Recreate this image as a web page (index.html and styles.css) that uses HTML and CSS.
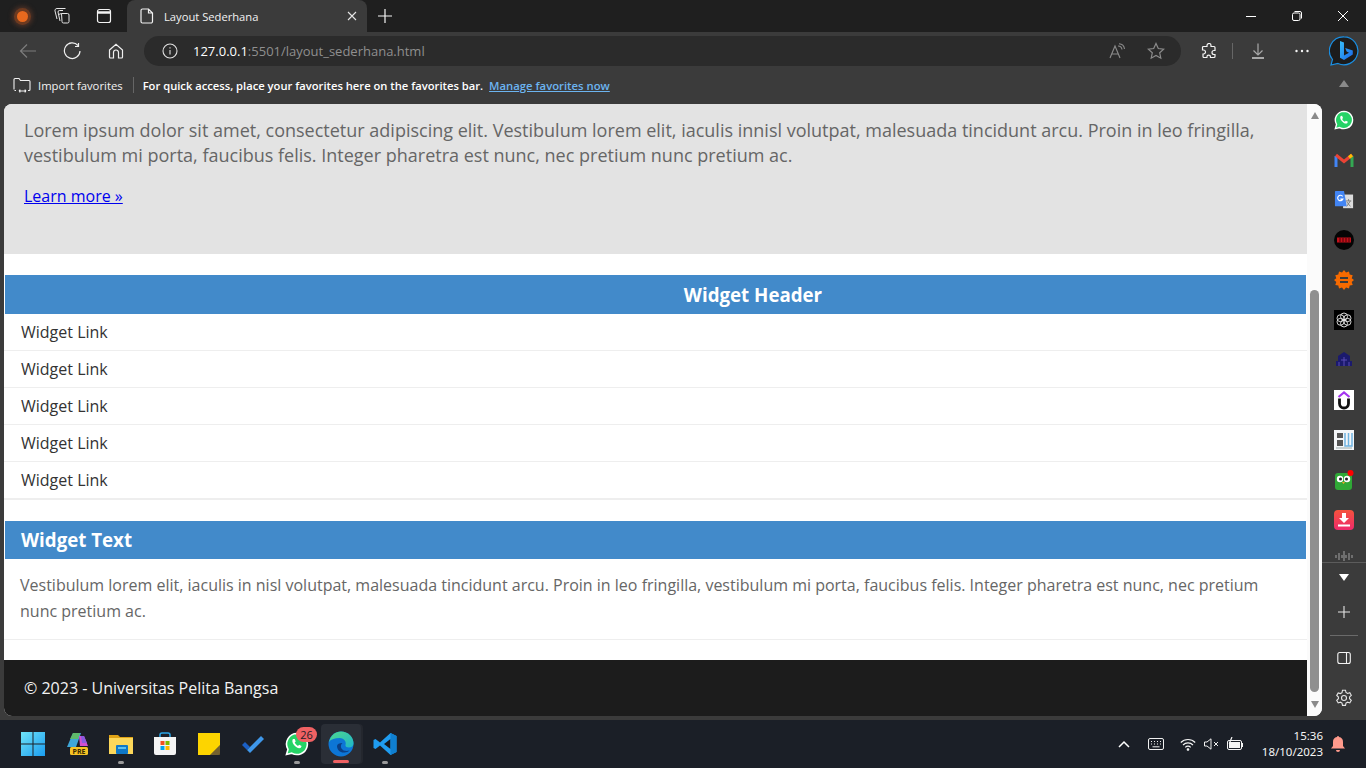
FILE: index.html
```html
<!DOCTYPE html>
<html lang="en">
<head>
  <meta charset="UTF-8" />
  <title>Layout Sederhana</title>
  <link rel="stylesheet" href="styles.css">
</head>
<body>
  <div class="desktop">
    <!-- tab strip -->
    <div class="tabstrip">
      <div class="strip-btn profile"><span class="profile-dot"></span></div>
      <div class="strip-btn">
        <svg width="18" height="18" viewBox="0 0 18 18" fill="none" stroke="#e6e6e6" stroke-width="1"><path d="M8.500 6.500h6a1.500 1.500 0 0 1 1.500 1.500v6.500a1.500 1.500 0 0 1-1.500 1.500h-4a1.500 1.500 0 0 1-1.500-1.500z"/><path d="M10 3.500H6.500A1.500 1.500 0 0 0 5 5l2 9"/><path d="M12.500 1.500H4a2 2 0 0 0-2 2.500l2 8"/><path d="M5.500 7.500l3-1"/></svg>
      </div>
      <div class="strip-btn">
        <svg width="16" height="16" viewBox="0 0 16 16" fill="none" stroke="#f2f2f2" stroke-width="1.200"><rect x="1.500" y="1.500" width="13" height="13" rx="2"/><path d="M1.500 4.500h13" stroke-width="2.500"/></svg>
      </div>
      <div class="tab">
        <svg width="14" height="16" viewBox="0 0 14 16" fill="none" stroke="#f2f2f2" stroke-width="1.200"><path d="M2.500 1h6l4 4v8.500a1.500 1.500 0 0 1-1.500 1.500H2.500A1.500 1.500 0 0 1 1 13.500v-11A1.500 1.500 0 0 1 2.500 1zM8.500 1v4h4"/></svg>
        <span class="tab-title">Layout Sederhana</span>
        <svg class="tab-close" width="10" height="10" viewBox="0 0 10 10" stroke="#e6e6e6" stroke-width="1.100"><path d="M1 1l8 8M9 1l-8 8"/></svg>
      </div>
      <div class="new-tab">
        <svg width="16" height="16" viewBox="0 0 16 16" stroke="#f5f5f5" stroke-width="1.200"><path d="M8 1v14M1 8h14"/></svg>
      </div>
      <div class="window-btns">
        <div class="win-btn"><svg width="12" height="12" viewBox="0 0 12 12" stroke="#fff"><path d="M1 6.500h10"/></svg></div>
        <div class="win-btn"><svg width="12" height="12" viewBox="0 0 12 12" fill="none" stroke="#fff"><rect x="1.500" y="3" width="7.500" height="7.500" rx="1.500"/><path d="M3.500 1.500h5.500a1.500 1.500 0 0 1 1.500 1.500v5.500"/></svg></div>
        <div class="win-btn"><svg width="12" height="12" viewBox="0 0 12 12" stroke="#fff"><path d="M1 1l10 10M11 1L1 11"/></svg></div>
      </div>
    </div>

    <!-- address bar row -->
    <div class="toolbar">
      <div class="tool-btn">
        <svg width="18" height="18" viewBox="0 0 18 18" fill="none" stroke="#7d7d7d" stroke-width="1.200"><path d="M17 9H1.500M8 2.500 1.500 9 8 15.500"/></svg>
      </div>
      <div class="tool-btn">
        <svg width="18" height="18" viewBox="0 0 18 18" fill="none" stroke="#f0f0f0" stroke-width="1.200"><path d="M15 3.500a7.800 7.800 0 1 0 2 5.500"/><path d="M15.500 1v3.500H12"/></svg>
      </div>
      <div class="tool-btn">
        <svg width="16" height="16" viewBox="0 0 16 16" fill="none" stroke="#f0f0f0" stroke-width="1.200"><path d="M1.500 7 8 1.200 14.500 7v7a1 1 0 0 1-1 1h-3V9.500a2.500 2.500 0 0 0-5 0V15h-3a1 1 0 0 1-1-1z"/></svg>
      </div>
      <div class="address">
        <svg class="info-icon" width="16" height="16" viewBox="0 0 16 16" fill="none" stroke="#e0e0e0" stroke-width="1.100"><circle cx="8" cy="8" r="7"/><path d="M8 7v4.500M8 4.200v1.300"/></svg>
        <span class="url"><span class="url-host">127.0.0.1</span>:5501/layout_sederhana.html</span>
        <svg class="addr-icon" width="18" height="16" viewBox="0 0 18 16" fill="none" stroke="#8c8c8c" stroke-width="1.100"><path d="M1 15 6 3l5 12M2.800 11h6.400"/><path d="M9 3a4 4 0 0 1 4 3.500M10 .8a6 6 0 0 1 5.500 5.200"/></svg>
        <svg class="addr-icon star" width="18" height="18" viewBox="0 0 18 18" fill="none" stroke="#8c8c8c" stroke-width="1.200"><path d="M9 1.500l2.300 5 5.400.6-4 3.700 1.100 5.400L9 13.500l-4.800 2.700 1.100-5.400-4-3.700 5.400-.6z"/></svg>
      </div>
      <div class="tool-btn ext-btn">
        <svg width="16" height="16" viewBox="0 0 16 16" fill="none" stroke="#f5f5f5" stroke-width="1.200"><path d="M6 2.500a2 2 0 0 1 4 0V3.500h3a1 1 0 0 1 1 1v3h-1a2 2 0 0 0 0 4h1v2a1 1 0 0 1-1 1H9.500v-.5a1.800 1.800 0 0 0-3.600 0v.5H3a1 1 0 0 1-1-1V11h.5a2 2 0 0 0 0-4H1.500V4.500a1 1 0 0 1 1-1H6z"/></svg>
      </div>
      <span class="tool-sep"></span>
      <div class="tool-btn dl-btn">
        <svg width="14" height="16" viewBox="0 0 14 16" fill="none" stroke-width="1.200"><path d="M7 .5v11M2.500 7.500 7 12l4.500-4.500" stroke="#a8a8a8"/><path d="M1 15h12" stroke="#f5f5f5"/></svg>
      </div>
      <div class="tool-btn dots-btn">
        <svg width="16" height="4" viewBox="0 0 16 4" fill="#f5f5f5"><circle cx="2.500" cy="2" r="1.200"/><circle cx="8" cy="2" r="1.200"/><circle cx="13.500" cy="2" r="1.200"/></svg>
      </div>
      <div class="bing-btn">
        <svg width="30" height="30" viewBox="0 0 30 30">
          <defs>
            <linearGradient id="bingB" x1="0" y1="0" x2="1" y2="1"><stop offset="0" stop-color="#37bdf8"/><stop offset="1" stop-color="#1b66e8"/></linearGradient>
          </defs>
          <path d="M15 .8a14 14 0 1 1-6 26.700L2 29l1.500-5.500A14 14 0 0 1 15 .8z" fill="#1c1c1c" stroke="#1a8fe3" stroke-width="1.200"/>
          <path d="M11 5l4 1.500v13l5-2.800-2.400-1.200-1.400-3.600 7.600 2.700v4L15 24l-4-2.200z" fill="url(#bingB)"/>
        </svg>
      </div>
    </div>

    <div class="browser-main">
      <div class="browser-left">
        <!-- favorites bar -->
        <div class="favbar">
          <svg width="18" height="16" viewBox="0 0 18 16" fill="none" stroke="#f0f0f0" stroke-width="1.100"><path d="M1 12.500V2.500a1 1 0 0 1 1-1h4l1.500 2H16a1 1 0 0 1 1 1v8a1 1 0 0 1-1 1h-1M3 13.500H1.500M6 14h7M6 14l1.300-1.300M6 14l1.300 1.300M13 14l-1.300-1.300M13 14l-1.300 1.300"/></svg>
          <span class="fav-import">Import favorites</span>
          <span class="fav-sep"></span>
          <b class="fav-hint">For quick access, place your favorites here on the favorites bar.</b>
          <a class="fav-link" href="#">Manage favorites now</a>
        </div>

        <!-- the page inside the browser -->
        <div class="viewport">
          <div class="page">
            <section class="hero">
              <p>Lorem ipsum dolor sit amet, consectetur adipiscing elit. Vestibulum lorem elit, iaculis innisl volutpat, malesuada tincidunt arcu. Proin in leo fringilla, vestibulum mi porta, faucibus felis. Integer pharetra est nunc, nec pretium nunc pretium ac.</p>
              <a class="learn" href="#">Learn more »</a>
            </section>

            <section class="widget widget-links">
              <h3 class="widget-head">Widget Header</h3>
              <ul class="link-list">
                <li>Widget Link</li>
                <li>Widget Link</li>
                <li>Widget Link</li>
                <li>Widget Link</li>
                <li>Widget Link</li>
              </ul>
            </section>

            <section class="widget widget-text">
              <h3 class="widget-head">Widget Text</h3>
              <p>Vestibulum lorem elit, iaculis in nisl volutpat, malesuada tincidunt arcu. Proin in leo fringilla, vestibulum mi porta, faucibus felis. Integer pharetra est nunc, nec pretium nunc pretium ac.</p>
            </section>

            <footer class="page-footer">© 2023 - Universitas Pelita Bangsa</footer>
          </div>
          <div class="scrollbar">
            <span class="arrow-up"></span>
            <span class="thumb"></span>
            <span class="arrow-down"></span>
          </div>
        </div>
      </div>

      <!-- edge sidebar -->
      <aside class="sidebar">
        <span class="side-caret-up"></span>
        <div class="side-apps">
          <svg viewBox="0 0 22 22"><path d="M11 1.500a9.500 9.500 0 0 0-8.200 14.300L1.500 20.500l4.800-1.200A9.500 9.500 0 1 0 11 1.500z" fill="#25d366" stroke="#fff" stroke-width="1.500"/><path d="M7.500 6.500c-1 1-1 3 1 5.500s4.500 3.500 6 2.500l.8-1.500-2.300-1.200-1 1c-1.200-.3-2.500-1.700-3-3l.9-1-1-2.400z" fill="#fff"/></svg>
          <svg viewBox="0 0 20 20" fill="none" stroke-width="3"><path d="M2 17V6" stroke="#4285f4"/><path d="M18 17V6" stroke="#34a853"/><path d="M2 5l8 6.500L18 5" stroke="#ea4335"/><path d="M18 5l-3 2.500" stroke="#fbbc04"/></svg>
          <svg viewBox="0 0 22 22"><rect x="10" y="5" width="11" height="15" fill="#dcdcdc"/><path d="M13 12h6M16 10v2M14 18l4-6M14 13l4 5" stroke="#777" fill="none"/><path d="M2 1h9l3 17H2a1 1 0 0 1-1-1V2a1 1 0 0 1 1-1z" fill="#4285f4"/><path d="M9.500 7a3 3 0 1 0 .3 3H7" fill="none" stroke="#fff" stroke-width="1.300"/></svg>
          <svg viewBox="0 0 20 20"><circle cx="10" cy="10" r="10" fill="#050505"/><rect x="3" y="7.500" width="14" height="5" fill="#c4101a"/><path d="M6 8v4M9 8v4M12 8v4M15 8v4" stroke="#4a0206"/></svg>
          <svg viewBox="0 0 20 20"><path d="M10 0l2 2.500 3-1 .7 3 3 .8-1 3L20 10l-2.300 1.900 1 3-3 .7-.7 3-3-1L10 20l-2-2.400-3 1-.7-3-3-.7 1-3L0 10l2.300-1.700-1-3 3-.8.700-3 3 1z" fill="#f76a00"/><path d="M6 8h8M6 12h8" stroke="#3b3b3b" stroke-width="2"/></svg>
          <svg viewBox="0 0 20 20" fill="none"><rect width="20" height="20" fill="#000"/><g stroke="#e6e6e6" stroke-width=".9"><circle cx="10" cy="6.500" r="3.500"/><circle cx="10" cy="13.500" r="3.500"/><circle cx="6.500" cy="8.200" r="3.500"/><circle cx="13.500" cy="8.200" r="3.500"/><circle cx="6.500" cy="11.800" r="3.500"/><circle cx="13.500" cy="11.800" r="3.500"/></g></svg>
          <svg viewBox="0 0 20 20"><path d="M10 2 4 6v5H2v5h16v-5h-2V6z" fill="#1b1a6d"/><path d="M5 16v-4M15 16v-4M10 7v9M7 10h6" stroke="#5a4bb5"/></svg>
          <svg viewBox="0 0 20 20" fill="none"><rect width="20" height="20" fill="#fff"/><path d="M4.500 7 10 2.500 15.500 7" stroke="#a435f0" stroke-width="2.200"/><path d="M5.500 8.500v5a4.500 4.500 0 0 0 9 0v-5" stroke="#111" stroke-width="2.800"/></svg>
          <svg viewBox="0 0 20 20" fill="none"><rect width="20" height="20" fill="#f4f6f8"/><path d="M3 3h6v5H3zM3 10h6v6H3z" fill="#555"/><path d="M11 3v13h7V3M14.500 3v13" stroke="#6fb3e0" stroke-width="1.500"/><path d="M2 18h16" stroke="#9aa"/></svg>
          <svg viewBox="0 0 20 20"><rect x="1" y="3" width="17" height="17" rx="3" fill="#2fa836"/><circle cx="6" cy="9" r="3.200" fill="#fff"/><circle cx="13" cy="9" r="3.200" fill="#fff"/><circle cx="6.500" cy="9" r="1.500" fill="#222"/><circle cx="12.500" cy="9" r="1.500" fill="#222"/><path d="M8 12h3l-1.500 2z" fill="#f5a623"/><circle cx="16.500" cy="3" r="3" fill="#f00"/></svg>
          <svg viewBox="0 0 20 20"><defs><linearGradient id="dlBg" x1="0" y1="0" x2="0" y2="1"><stop offset="0" stop-color="#f5533d"/><stop offset="1" stop-color="#ee2a6b"/></linearGradient></defs><rect width="20" height="20" rx="4" fill="url(#dlBg)"/><path d="M8 3h4v5h3l-5 5-5-5h3z" fill="#fff"/><rect x="4" y="14.500" width="12" height="2" fill="#fff"/></svg>
          <svg viewBox="0 0 20 20" stroke="#9a9a9a" stroke-width="1.100"><path d="M2 5v3M5 3v7M8 5v3M10 1v10M12 5v3M15 3v7M18 5v3"/></svg>
        </div>
        <div class="side-tools">
          <span class="side-caret-down"></span>
          <svg class="side-plus" width="14" height="14" viewBox="0 0 14 14" stroke="#e6e6e6" stroke-width="1.100"><path d="M7 1v12M1 7h12"/></svg>
          <span class="side-sep"></span>
          <svg class="side-panel" width="14" height="14" viewBox="0 0 14 14" fill="none" stroke="#f2f2f2" stroke-width="1.100"><rect x=".8" y="1.500" width="12.500" height="11" rx="2"/><path d="M9.500 1.500v11"/></svg>
          <svg class="side-gear" width="18" height="18" viewBox="0 0 18 18" fill="none" stroke="#e6e6e6" stroke-width="1.100"><circle cx="9" cy="9" r="2.500"/><path d="M7.500 1.200h3l.5 2.300 1.600.9 2.200-.7 1.500 2.600-1.700 1.600v1.800l1.700 1.600-1.500 2.600-2.200-.7-1.600.9-.5 2.300h-3l-.5-2.300-1.600-.9-2.200.7-1.500-2.600 1.700-1.600V8.100L1.700 6.500l1.500-2.600 2.200.7 1.600-.9z"/></svg>
        </div>
      </aside>
    </div>

    <!-- windows taskbar -->
    <div class="taskbar">
      <div class="task-apps">
        <div class="task-item">
          <svg width="24" height="24" viewBox="0 0 24 24"><defs><linearGradient id="winG" x1="0" y1="0" x2="1" y2="1"><stop offset="0" stop-color="#6fe3f7"/><stop offset="1" stop-color="#1a9cf0"/></linearGradient></defs><path d="M0 0h11.500v11.500H0zM12.500 0H24v11.500H12.500zM0 12.500h11.500V24H0zM12.500 12.500H24V24H12.500z" fill="url(#winG)"/></svg>
        </div>
        <div class="task-item">
          <svg width="24" height="24" viewBox="0 0 24 24"><path d="M8 1h8l-5 14H2z" fill="#3ea6d8"/><path d="M8 1h7l-2 6H5z" fill="#5fb96a"/><path d="M14 4h5l4 10h-8z" fill="#d04fd0"/><path d="M16 4h3l3 7h-5z" fill="#8a5ae0"/><rect x="5" y="15" width="18" height="8" rx="1.500" fill="#f7c325"/><text x="14" y="21.800" class="pre-text">PRE</text></svg>
        </div>
        <div class="task-item">
          <svg width="24" height="24" viewBox="0 0 24 24"><path d="M0 3h9l2 2h13v17H0z" fill="#e0a316"/><path d="M0 6h24v16H0z" fill="#fcd75a"/><rect x="7" y="13" width="12" height="9" rx="1" fill="#0f78c8"/><rect x="9" y="15" width="8" height="2" fill="#5cc0f0"/></svg>
          <span class="run-dot"></span>
        </div>
        <div class="task-item">
          <svg width="24" height="24" viewBox="0 0 24 24" fill="none"><path d="M7 6V3a2 2 0 0 1 2-2h6a2 2 0 0 1 2 2v3" stroke="#29a5e8" stroke-width="1.500"/><path d="M1 5h22v16a2 2 0 0 1-2 2H3a2 2 0 0 1-2-2z" fill="#f4f4f4"/><path d="M7.500 9H11.500v4H7.500z" fill="#f25022"/><path d="M12.500 9h4v4h-4z" fill="#7fba00"/><path d="M7.500 14h4v4h-4z" fill="#00a4ef"/><path d="M12.500 14h4v4h-4z" fill="#ffb900"/></svg>
        </div>
        <div class="task-item">
          <svg width="22" height="22" viewBox="0 0 22 22"><path d="M0 0h22v15l-7 7H0z" fill="#fdd400"/><path d="M22 12v8a2 2 0 0 1-2 2h-8z" fill="#444"/><path d="M12 22l10-10v10z" fill="#e3a500" opacity=".3"/></svg>
        </div>
        <div class="task-item">
          <svg width="24" height="24" viewBox="0 0 24 24"><path d="M1 13l3-3 5 5-3 3z" fill="#1b5fc4"/><path d="M6 18 20 4l3 3L9 21z" fill="#3f97ea"/></svg>
        </div>
        <div class="task-item">
          <svg width="24" height="24" viewBox="0 0 24 24"><path d="M12 1.500a10.500 10.500 0 0 0-9 15.800L1.500 22.500l5.300-1.300A10.500 10.500 0 1 0 12 1.500z" fill="#25d366" stroke="#fff" stroke-width="1.600"/><path d="M8 7c-1 1-1 3.500 1 6s5 4 6.800 2.800l.8-1.700-2.500-1.300-1.100 1.100c-1.300-.3-2.700-1.900-3.300-3.300l1-1.100L9.700 7z" fill="#fff"/></svg>
          <span class="task-badge">26</span>
          <span class="run-dot"></span>
        </div>
        <div class="task-item task-active">
          <svg width="26" height="26" viewBox="0 0 26 26"><defs><linearGradient id="edgeG" x1="0" y1="0" x2="1" y2="1"><stop offset="0" stop-color="#4fd88c"/><stop offset="1" stop-color="#1fb6c9"/></linearGradient></defs><circle cx="13" cy="13" r="12.500" fill="#0d76d6"/><path d="M1 11C2.500 4.500 7.500.5 13 .5c7 0 12.500 5 12.500 12 0 2.500-2 4-4.500 4-2 0-4-.8-3.500-2.500 1-3-1-7-6-7C7 7 3 8 1 11z" fill="url(#edgeG)"/><path d="M9 15c0 4 3.500 7 7.500 6.500 2 0 4-1 5-2-3 1-6.500.5-8-2-1-1.500-1-4 1-5.500-3 0-5.500 1-5.500 3z" fill="#0a3f86"/></svg>
          <span class="run-bar"></span>
        </div>
        <div class="task-item">
          <svg width="24" height="24" viewBox="0 0 24 24"><path d="M17.500 1 23.500 4v16l-6 3L7 13.500 2.500 17 .5 16V8l2-1L7 10.500z" fill="#1f9cf0"/><path d="M17.500 7 11 12l6.500 5z" fill="#16181f"/><path d="M17.500 1 23.500 4v16l-6 3z" fill="#0f7fd0"/></svg>
          <span class="run-dot"></span>
        </div>
      </div>
      <div class="tray">
        <svg class="tray-caret" width="12" height="8" viewBox="0 0 12 8" fill="none" stroke="#fff" stroke-width="1.500"><path d="M1 7l5-5 5 5"/></svg>
        <svg class="tray-kbd" width="16" height="12" viewBox="0 0 16 12" fill="none" stroke="#f0f0f0"><rect x=".5" y=".5" width="15" height="11" rx="1.500"/><path d="M3 3.500h1M6 3.500h1M9 3.500h1M12 3.500h1M3 6h1M6 6h1M9 6h1M12 6h1M4.500 8.800h7"/></svg>
        <svg class="tray-wifi" width="16" height="13" viewBox="0 0 16 13" fill="none" stroke="#f5f5f5" stroke-width="1.100"><path d="M.8 4.500a10 10 0 0 1 14.400 0M3 7a7 7 0 0 1 10 0M5.300 9.300a3.600 3.600 0 0 1 5.400 0"/><circle cx="8" cy="11.500" r=".8" fill="#f5f5f5"/></svg>
        <svg class="tray-sound" width="16" height="12" viewBox="0 0 16 12" fill="none" stroke="#f0f0f0"><path d="M.5 4H3L7 .8v10.400L3 8H.5z"/><path d="M10 4l4 4M14 4l-4 4"/></svg>
        <svg class="tray-batt" width="17" height="14" viewBox="0 0 17 14"><rect x=".5" y="3.500" width="14" height="9" rx="1.500" fill="none" stroke="#f5f5f5"/><path d="M15.500 6v4" stroke="#f5f5f5"/><rect x="2" y="5" width="11" height="6" fill="#f5f5f5"/><path d="M5 0 2.500 6H5l-1 4" fill="none" stroke="#f5f5f5" stroke-width="1.200"/></svg>
        <div class="clock"><span>15:36</span><span>18/10/2023</span></div>
        <svg class="tray-bell" width="14" height="16" viewBox="0 0 14 16" fill="#ff9a8c"><path d="M7 0a1 1 0 0 1 1 1 5 5 0 0 1 4 5v4l2 2.500H0L2 10V6a5 5 0 0 1 4-5 1 1 0 0 1 1-1zM5 14h4a2 2 0 0 1-4 0z"/></svg>
      </div>
    </div>
  </div>
</body>
</html>
```

FILE: styles.css
```css
* {
  box-sizing: border-box;
}

html, body {
  margin: 0;
  padding: 0;
  height: 100%;
  overflow: hidden;
}

body {
  font-family: "Open Sans", sans-serif;
  background: #3b3b3b;
}

svg {
  display: block;
  flex: none;
}

.desktop {
  width: 1366px;
  height: 768px;
  display: flex;
  flex-direction: column;
}

/* tab strip */
.tabstrip {
  height: 32px;
  background: #1f1f1f;
  display: flex;
  align-items: center;
  flex: none;
  padding-left: 2px;
}

.strip-btn {
  width: 40px;
  height: 32px;
  display: flex;
  align-items: center;
  justify-content: center;
  margin-right: 2px;
}

.strip-btn.profile {
  margin-right: 0;
}

.profile-dot {
  width: 11px;
  height: 11px;
  border-radius: 50%;
  background: #e8691e;
  box-shadow: 0 0 0 3px #6d3a20, 0 0 4px 5px #4a3026;
}

.tab {
  width: 240px;
  height: 32px;
  margin-left: 1px;
  background: #3b3b3b;
  border-radius: 8px 8px 0 0;
  display: flex;
  align-items: center;
  padding-left: 13px;
  color: #f2f2f2;
}

.tab-title {
  font-size: 11.200px;
  margin-left: 10px;
}

.tab-close {
  margin-left: auto;
  margin-right: 10px;
}

.new-tab {
  width: 36px;
  display: flex;
  justify-content: center;
}

.window-btns {
  margin-left: auto;
  display: flex;
}

.win-btn {
  width: 46px;
  height: 32px;
  display: flex;
  align-items: center;
  justify-content: center;
}

/* address bar row */
.toolbar {
  height: 38px;
  flex: none;
  display: flex;
  align-items: center;
  padding-left: 6px;
  background: #3b3b3b;
}

.tool-btn {
  width: 44px;
  height: 30px;
  display: flex;
  align-items: center;
  justify-content: center;
}

.address {
  width: 1037px;
  height: 30px;
  margin-left: 6px;
  background: #2b2b2b;
  border-radius: 15px;
  display: flex;
  align-items: center;
  padding-left: 18px;
}

.url {
  margin-left: 15px;
  font-size: 13px;
  color: #8f8f8f;
}

.url-host {
  color: #fff;
}

.addr-icon {
  margin-left: auto;
  margin-right: 20px;
}

.addr-icon.star {
  margin-left: 0;
  margin-right: 16px;
}

.ext-btn {
  margin-left: 6px;
}

.tool-sep {
  width: 1px;
  height: 16px;
  margin-left: 1px;
  background: #666;
}

.dl-btn {
  margin-left: 3px;
}

.bing-btn {
  margin-left: 5px;
}

.browser-main {
  flex: 1;
  display: flex;
  min-height: 0;
}

.browser-left {
  width: 1322px;
  padding: 0 0 4px 4px;
  display: flex;
  flex-direction: column;
}

/* favorites bar */
.favbar {
  height: 34px;
  flex: none;
  display: flex;
  align-items: center;
  padding: 0 0 4px 9px;
  font-size: 11.300px;
  color: #f2f2f2;
}

.fav-import {
  margin-left: 7px;
}

.fav-sep {
  width: 1px;
  height: 16px;
  background: #666;
  margin: 0 9px 0 10px;
}

.fav-hint {
  font-size: 11.200px;
  font-weight: 600;
  color: #fff;
}

.fav-link {
  margin-left: 6px;
  color: #6cb4f0;
  text-decoration: underline;
  font-weight: 600;
}

/* page in the browser */
.viewport {
  flex: 1;
  min-height: 0;
  display: flex;
  background: #fff;
  border-radius: 8px;
  overflow: hidden;
}

.page {
  width: 1303px;
  display: flex;
  flex-direction: column;
}

.hero {
  height: 150px;
  background: #e3e3e3;
  padding: 14px 20px 0;
  color: #666;
  flex: none;
}

.hero p {
  margin: 0 0 16px;
  font-size: 18px;
  line-height: 25px;
}

.learn {
  font-size: 16px;
  line-height: 25px;
  display: block;
  color: #00e;
  width: fit-content;
}

.widget {
  background: #fff;
  flex: none;
}

.widget-head {
  margin: 0 1px;
  padding-bottom: 1px;
  background: #428aca;
  color: #fff;
  font-size: 18.720px;
  font-weight: 700;
  display: flex;
  align-items: center;
}

.widget-links {
  margin-top: 21px;
  border-bottom: 2px solid #eee;
}

.widget-links .widget-head {
  height: 39px;
  justify-content: center;
  padding-left: 195px;
}

.link-list {
  list-style: none;
  margin: 0;
  padding: 0;
}

.link-list li {
  height: 37px;
  padding-left: 17px;
  font-size: 16px;
  line-height: 36px;
  color: #333;
  border-bottom: 1px solid #eee;
}

.link-list li:last-child {
  border-bottom: 0;
  height: 36px;
}

.widget-text {
  margin-top: 21px;
  border-bottom: 1px solid #eee;
  height: 119px;
}

.widget-text .widget-head {
  height: 38px;
  padding-left: 16px;
}

.widget-text p {
  margin: 0;
  padding: 14px 40px 0 16px;
  font-size: 16px;
  line-height: 25.600px;
  color: #666;
}

.page-footer {
  margin-top: 20px;
  flex: 1;
  background: #1c1c1c;
  color: #f2f2f2;
  font-size: 16px;
  padding-left: 20px;
  display: flex;
  align-items: center;
}

/* scrollbar */
.scrollbar {
  width: 15px;
  background: #fbfbfb;
  display: flex;
  flex-direction: column;
  align-items: center;
}

.arrow-up {
  margin-top: 8px;
  border-left: 4px solid transparent;
  border-right: 4px solid transparent;
  border-bottom: 7px solid #8a8a8a;
}

.thumb {
  width: 9px;
  height: 402px;
  margin-top: 171px;
  background: #8f8f8f;
  border-radius: 5px;
}

.arrow-down {
  margin-top: 9px;
  border-left: 4px solid transparent;
  border-right: 4px solid transparent;
  border-top: 7px solid #8a8a8a;
}

/* edge sidebar */
.sidebar {
  width: 44px;
  display: flex;
  flex-direction: column;
  align-items: center;
  background: #3b3b3b;
}

.side-caret-up {
  margin-top: 10px;
  border-left: 5px solid transparent;
  border-right: 5px solid transparent;
  border-bottom: 7px solid #8a8a8a;
  flex: none;
}

.side-apps {
  width: 44px;
  height: 476px;
  padding-top: 23px;
  overflow: hidden;
  display: flex;
  flex-direction: column;
  align-items: center;
  gap: 20px;
  border-bottom: 1px solid #5c5c5c;
  flex: none;
}

.side-apps svg {
  width: 20px;
  height: 20px;
}

.side-tools {
  display: flex;
  flex-direction: column;
  align-items: center;
}

.side-caret-down {
  margin-top: 11px;
  border-left: 5px solid transparent;
  border-right: 5px solid transparent;
  border-top: 7px solid #fff;
}

.side-plus {
  margin-top: 24px;
}

.side-sep {
  width: 28px;
  height: 1px;
  background: #6a6a6a;
  margin-top: 16px;
}

.side-panel {
  margin-top: 15px;
}

.side-gear {
  margin-top: 24px;
}

/* windows taskbar */
.taskbar {
  height: 48px;
  flex: none;
  background: #1b1f27;
  display: flex;
  align-items: center;
  padding-left: 13px;
}

.task-apps {
  display: flex;
  gap: 4px;
}

.task-item {
  position: relative;
  width: 40px;
  height: 40px;
  display: flex;
  align-items: center;
  justify-content: center;
}

.task-active {
  background: #2a2e36;
  border-radius: 4px;
  box-shadow: 2px 0 0 #24272e;
}

.task-badge {
  position: absolute;
  top: 3px;
  right: 0;
  width: 21px;
  height: 15px;
  border-radius: 8px;
  background: #ef6163;
  color: #1b1f27;
  font-size: 11px;
  line-height: 15px;
  text-align: center;
}

.run-dot {
  position: absolute;
  bottom: 0;
  left: 17px;
  width: 6px;
  height: 3px;
  border-radius: 2px;
  background: #9a9a9a;
}

.run-bar {
  position: absolute;
  bottom: 1px;
  left: 12px;
  width: 16px;
  height: 3px;
  border-radius: 2px;
  background: #ef6163;
}

.pre-text {
  font-family: "Open Sans", sans-serif;
  font-size: 7px;
  font-weight: 700;
  text-anchor: middle;
  fill: #3a2a00;
}

.tray {
  margin-left: auto;
  display: flex;
  align-items: center;
  color: #f5f5f5;
  padding-right: 21px;
}

.tray-kbd {
  margin-left: 18px;
}

.tray-wifi {
  margin-left: 16px;
}

.tray-sound {
  margin-left: 8px;
}

.tray-batt {
  margin-left: 7px;
}

.clock {
  width: 72px;
  margin-left: 7px;
  display: flex;
  flex-direction: column;
  align-items: flex-end;
  font-family: "Noto Sans", sans-serif;
  font-size: 11.500px;
  line-height: 16px;
}

.tray-bell {
  margin-left: 8px;
}
```
